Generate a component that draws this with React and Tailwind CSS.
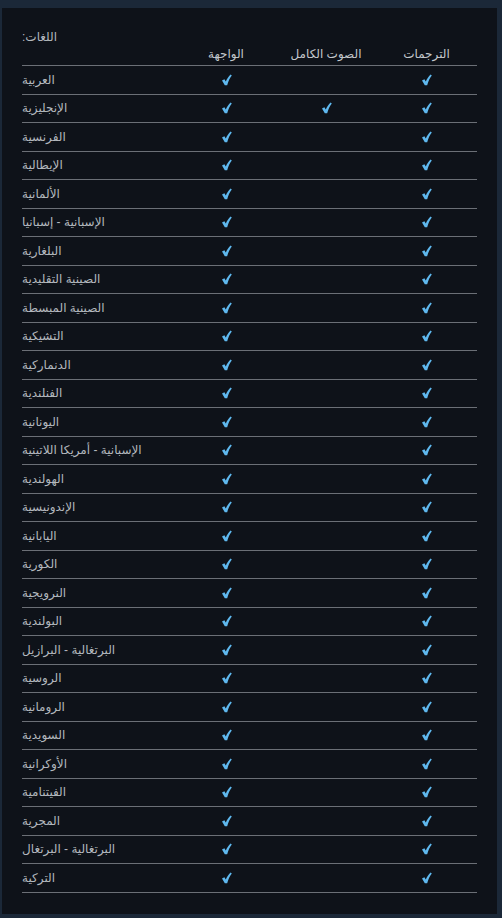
import React from 'react'

const languages = [
  { name: 'العربية', ui: true, audio: false, subs: true },
  { name: 'الإنجليزية', ui: true, audio: true, subs: true },
  { name: 'الفرنسية', ui: true, audio: false, subs: true },
  { name: 'الإيطالية', ui: true, audio: false, subs: true },
  { name: 'الألمانية', ui: true, audio: false, subs: true },
  { name: 'الإسبانية - إسبانيا', ui: true, audio: false, subs: true },
  { name: 'البلغارية', ui: true, audio: false, subs: true },
  { name: 'الصينية التقليدية', ui: true, audio: false, subs: true },
  { name: 'الصينية المبسطة', ui: true, audio: false, subs: true },
  { name: 'التشيكية', ui: true, audio: false, subs: true },
  { name: 'الدنماركية', ui: true, audio: false, subs: true },
  { name: 'الفنلندية', ui: true, audio: false, subs: true },
  { name: 'اليونانية', ui: true, audio: false, subs: true },
  { name: 'الإسبانية - أمريكا اللاتينية', ui: true, audio: false, subs: true },
  { name: 'الهولندية', ui: true, audio: false, subs: true },
  { name: 'الإندونيسية', ui: true, audio: false, subs: true },
  { name: 'اليابانية', ui: true, audio: false, subs: true },
  { name: 'الكورية', ui: true, audio: false, subs: true },
  { name: 'النرويجية', ui: true, audio: false, subs: true },
  { name: 'البولندية', ui: true, audio: false, subs: true },
  { name: 'البرتغالية - البرازيل', ui: true, audio: false, subs: true },
  { name: 'الروسية', ui: true, audio: false, subs: true },
  { name: 'الرومانية', ui: true, audio: false, subs: true },
  { name: 'السويدية', ui: true, audio: false, subs: true },
  { name: 'الأوكرانية', ui: true, audio: false, subs: true },
  { name: 'الفيتنامية', ui: true, audio: false, subs: true },
  { name: 'المجرية', ui: true, audio: false, subs: true },
  { name: 'البرتغالية - البرتغال', ui: true, audio: false, subs: true },
  { name: 'التركية', ui: true, audio: false, subs: true },
]

// steam-style blue tick
const Check = () => (
  <svg width="10" height="12" viewBox="0 0 10 12" className="block">
    <path
      d="M0 6.6 L2.4 5.2 L3.8 7.4 C5 4.8 6.6 2.4 8.6 0.4 L9.8 1.4 C7.9 3.8 6.2 7.2 5.2 11.2 L2.8 11.2 Z"
      fill="#5fb8ee"
    />
  </svg>
)

const Cell = ({ on }) => (
  <div className="flex items-center justify-center pl-[1px]">{on && <Check />}</div>
)

const App = () => {
  return (
    <div className="min-h-screen bg-[#1b2838] pt-2" style={{ fontFamily: '"Liberation Sans", "DejaVu Sans", Arial, sans-serif' }}>
      <div className="ml-[2px] w-[495px] bg-[#0e1219] pl-5 pr-5 pt-[22px] pb-[21px] text-[12px] text-[#b3b8be]">
        <div dir="rtl" className="text-left leading-[15px]">اللغات:</div>

        {/* Header */}
        <div className="grid h-[21px] grid-cols-[154px_100px_100px_101px] items-end border-b border-[#6b6f76] pb-[2px] text-[#c3c7cc]">
          <div />
          <div dir="rtl" className="text-center">الواجهة</div>
          <div dir="rtl" className="text-center">الصوت الكامل</div>
          <div dir="rtl" className="text-center">الترجمات</div>
        </div>

        {languages.map((l) => (
          <div
            key={l.name}
            className="grid h-[28.5px] grid-cols-[154px_100px_100px_101px] items-center border-b border-[#6b6f76]"
          >
            <div dir="rtl" className="text-left whitespace-nowrap">{l.name}</div>
            <Cell on={l.ui} />
            <Cell on={l.audio} />
            <Cell on={l.subs} />
          </div>
        ))}
      </div>
    </div>
  )
}

export default App
